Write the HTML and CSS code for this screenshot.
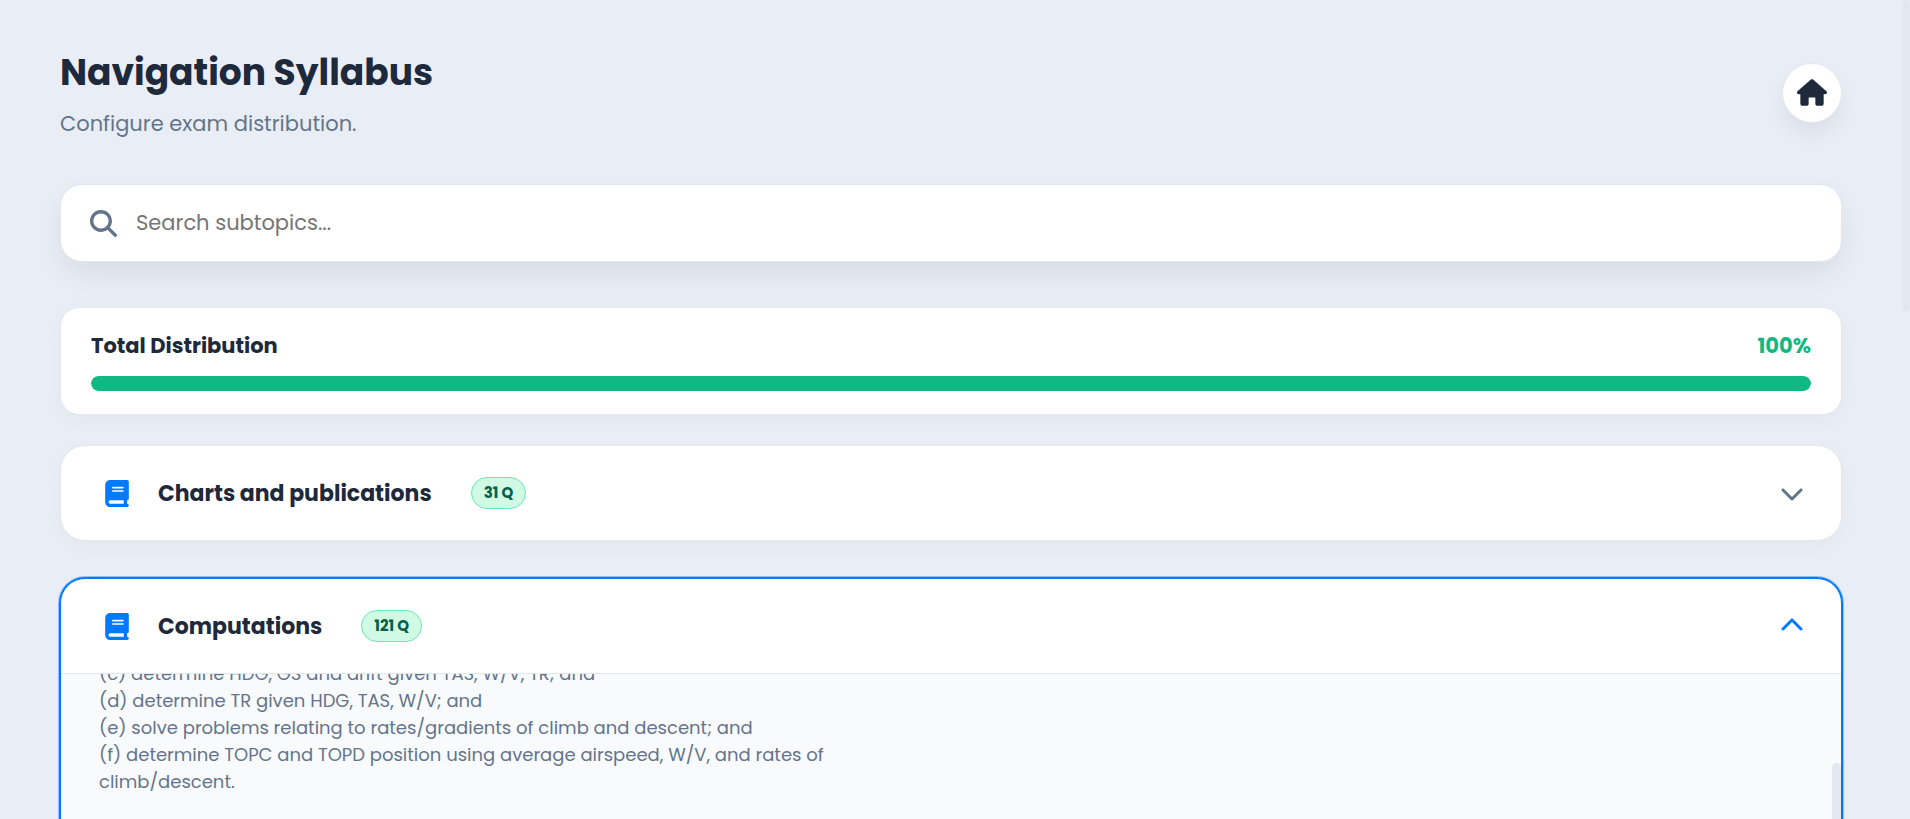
FILE: index.html
```html
<!DOCTYPE html>
<html lang="en">
<head>
    <meta charset="UTF-8">
    <meta name="viewport" content="width=device-width, initial-scale=1.0">
    <title>Navigation Syllabus</title>
    <link rel="stylesheet" href="styles.css">
</head>
<body>

<div class="page">
<main class="container">

    <!-- Page header -->
    <header class="header">
        <div>
            <h1>Navigation Syllabus</h1>
            <p class="subtitle">Configure exam distribution.</p>
        </div>
        <a href="#" class="home-btn" aria-label="Home">
            <svg viewBox="0 0 576 512"><path d="M575.8 255.5c0 18-15 32.1-32 32.1h-32l.7 160.2c0 2.7-.2 5.4-.5 8.1V472c0 22.1-17.9 40-40 40H392c-22.1 0-40-17.9-40-40V360c0-4.400-3.600-8-8-8H232c-4.400 0-8 3.600-8 8v112c0 22.1-17.9 40-40 40H104c-22.1 0-40-17.9-40-40V287.6H32c-18 0-32-14-32-32.1c0-9 3-17 10-24L266.4 8c7-7 15-8 22-8s15 2 21 7L564.8 231.5c8 7 12 15 11 24z"/></svg>
        </a>
    </header>

    <!-- Search -->
    <label class="search">
        <svg viewBox="0 0 512 512"><path d="M416 208c0 45.9-14.9 88.3-40 122.7L502.6 457.4c12.5 12.5 12.5 32.8 0 45.3s-32.8 12.5-45.3 0L330.7 376c-34.4 25.2-76.8 40-122.7 40C93.1 416 0 322.9 0 208S93.1 0 208 0S416 93.1 416 208zM208 352a144 144 0 1 0 0-288 144 144 0 1 0 0 288z"/></svg>
        <input type="text" placeholder="Search subtopics..." aria-label="Search subtopics">
    </label>

    <!-- Distribution bar -->
    <section class="distribution">
        <div class="distribution-head">
            <span>Total Distribution</span>
            <span class="percent">100%</span>
        </div>
        <div class="bar">
            <div class="bar-fill" style="width: 100%"></div>
        </div>
    </section>

    <!-- Topics -->
    <section class="topic">
        <button type="button" class="topic-header" aria-expanded="false">
            <span class="topic-icon"><svg viewBox="0 0 448 512"><path d="M96 0C43 0 0 43 0 96V416c0 53 43 96 96 96H384h32c17.7 0 32-14.3 32-32s-14.3-32-32-32V384c17.7 0 32-14.3 32-32V32c0-17.7-14.3-32-32-32H384 96zm0 384H352v64H96c-17.7 0-32-14.3-32-32s14.3-32 32-32zm32-240c0-8.8 7.2-16 16-16H336c8.8 0 16 7.2 16 16s-7.2 16-16 16H144c-8.8 0-16-7.2-16-16zm16 48H336c8.8 0 16 7.2 16 16s-7.2 16-16 16H144c-8.8 0-16-7.2-16-16s7.2-16 16-16z"/></svg></span>
            <span class="topic-title">Charts and publications</span>
            <span class="badge">31 Q</span>
            <svg class="chevron" viewBox="0 0 512 512"><path d="M233.4 406.6c12.5 12.5 32.8 12.5 45.3 0l192-192c12.5-12.5 12.5-32.8 0-45.3s-32.8-12.5-45.3 0L256 338.7 86.6 169.4c-12.5-12.5-32.8-12.5-45.3 0s-12.5 32.8 0 45.3l192 192z"/></svg>
        </button>
    </section>

    <section class="topic active">
        <button type="button" class="topic-header" aria-expanded="true">
            <span class="topic-icon"><svg viewBox="0 0 448 512"><path d="M96 0C43 0 0 43 0 96V416c0 53 43 96 96 96H384h32c17.7 0 32-14.3 32-32s-14.3-32-32-32V384c17.7 0 32-14.3 32-32V32c0-17.7-14.3-32-32-32H384 96zm0 384H352v64H96c-17.7 0-32-14.3-32-32s14.3-32 32-32zm32-240c0-8.8 7.2-16 16-16H336c8.8 0 16 7.2 16 16s-7.2 16-16 16H144c-8.8 0-16-7.2-16-16zm16 48H336c8.8 0 16 7.2 16 16s-7.2 16-16 16H144c-8.8 0-16-7.2-16-16s7.2-16 16-16z"/></svg></span>
            <span class="topic-title">Computations</span>
            <span class="badge">121 Q</span>
            <svg class="chevron" viewBox="0 0 512 512"><path d="M233.4 406.6c12.5 12.5 32.8 12.5 45.3 0l192-192c12.5-12.5 12.5-32.8 0-45.3s-32.8-12.5-45.3 0L256 338.7 86.6 169.4c-12.5-12.5-32.8-12.5-45.3 0s-12.5 32.8 0 45.3l192 192z"/></svg>
        </button>
        <div class="topic-body">
            <p class="description">
                (c) determine HDG, GS and drift given TAS, W/V, TR; and<br>
                (d) determine TR given HDG, TAS, W/V; and<br>
                (e) solve problems relating to rates/gradients of climb and descent; and<br>
                (f) determine TOPC and TOPD position using average airspeed, W/V, and rates of climb/descent.
            </p>
            <div class="topic-track"><div class="thumb"></div></div>
        </div>
    </section>

</main>

<div class="page-track"><div class="thumb"></div></div>
</div>

</body>
</html>
```
FILE: styles.css
```css
* {
    margin: 0;
    padding: 0;
    box-sizing: border-box;
}

body {
    font-family: Poppins, Inter, sans-serif;
    background-color: #e9eef6;
    color: #1e293b;
}

svg {
    display: block;
    fill: currentColor;
}

/* Page shell: content and scroll track */
.page {
    display: flex;
    height: 100vh;
    overflow: hidden;
}

.container {
    flex: 1;
    min-width: 0;
    padding: 45px 60px;
}

.page-track {
    width: 8px;
}

.page-track .thumb {
    height: 38%;
}

.thumb {
    background-color: #e2e8f0;
    border-radius: 5px;
}

/* Header */
.header {
    display: flex;
    justify-content: space-between;
    align-items: center;
    margin-bottom: 44px;
}

h1 {
    font-size: 36px;
    font-weight: 700;
    line-height: 56px;
}

.subtitle {
    font-size: 21px;
    line-height: 32px;
    margin-top: 7px;
    color: #64748b;
}

.home-btn {
    display: flex;
    align-items: center;
    justify-content: center;
    width: 60px;
    height: 60px;
    border-radius: 50%;
    border: 1px solid #e2e8f0;
    background-color: #fff;
    color: #1e293b;
    box-shadow: 0 12px 25px -4px rgba(0, 0, 0, 0.08);
}

.home-btn svg {
    width: 30px;
    height: 27px;
}

/* Search */
.search {
    display: flex;
    align-items: center;
    gap: 19px;
    height: 78px;
    padding: 0 29px;
    margin-bottom: 45px;
    background-color: #fff;
    border: 1px solid #e2e8f0;
    border-radius: 22px;
    color: #64748b;
    box-shadow: 0 12px 30px -4px rgba(0, 0, 0, 0.09);
}

.search svg {
    width: 27px;
    height: 27px;
}

.search input {
    flex: 1;
    border: none;
    outline: none;
    background: none;
    font-family: inherit;
    font-size: 21px;
    line-height: 30px;
    color: #1e293b;
}

.search input::placeholder {
    color: #757575;
}

/* Distribution */
.distribution {
    padding: 22px 30px 23px;
    margin-bottom: 30px;
    background-color: #fff;
    border: 1px solid #e2e8f0;
    border-radius: 19px;
    box-shadow: 0 5px 19px rgba(0, 0, 0, 0.03);
}

.distribution-head {
    display: flex;
    justify-content: space-between;
    margin-bottom: 15px;
    font-size: 21px;
    font-weight: 700;
    line-height: 31px;
}

.percent {
    color: #10b981;
}

.bar {
    height: 15px;
    border-radius: 8px;
    background-color: #e2e8f0;
    overflow: hidden;
}

.bar-fill {
    height: 100%;
    border-radius: 8px;
    background-color: #10b981;
}

/* Topics */
.topic {
    margin-bottom: 37px;
    background-color: #fff;
    border: 1px solid #e2e8f0;
    border-radius: 25px;
    overflow: hidden;
    box-shadow: 0 5px 19px rgba(0, 0, 0, 0.03);
}

.topic.active {
    border-color: #007aff;
    box-shadow: 0 0 0 1px #007aff, 0 0 0 2px rgba(0, 122, 255, 0.4);
}

.topic-header {
    display: flex;
    align-items: center;
    width: 100%;
    height: 94px;
    padding: 0 37px;
    border: none;
    background: none;
    font-family: inherit;
    color: inherit;
    cursor: pointer;
}

.topic-icon {
    display: flex;
    justify-content: center;
    width: 38px;
    margin-right: 22px;
    color: #007aff;
}

.topic-icon svg {
    width: 24px;
    height: 27px;
}

.topic-title {
    font-size: 22px;
    font-weight: 700;
}

.badge {
    margin-left: 39px;
    padding: 0 12px;
    font-size: 15px;
    font-weight: 700;
    line-height: 30px;
    color: #065f46;
    background-color: #d1fae5;
    border: 1px solid #6ee7b7;
    border-radius: 16px;
}

.chevron {
    width: 24px;
    height: 24px;
    margin-left: auto;
    color: #64748b;
}

.active .chevron {
    color: #007aff;
    transform: rotate(180deg);
}

.topic-body {
    display: flex;
    justify-content: space-between;
    height: 500px;
    overflow: hidden;
    border-top: 1px solid #e2e8f0;
    background-color: #f8fafc;
}

/* scrolled part way into the first visible line */
.description {
    max-width: 800px;
    margin-top: -14px;
    padding-left: 38px;
    font-size: 18px;
    line-height: 27px;
    color: #64748b;
}

.topic-track {
    width: 9px;
    padding-top: 89px;
}

.topic-track .thumb {
    height: 200px;
}
```
